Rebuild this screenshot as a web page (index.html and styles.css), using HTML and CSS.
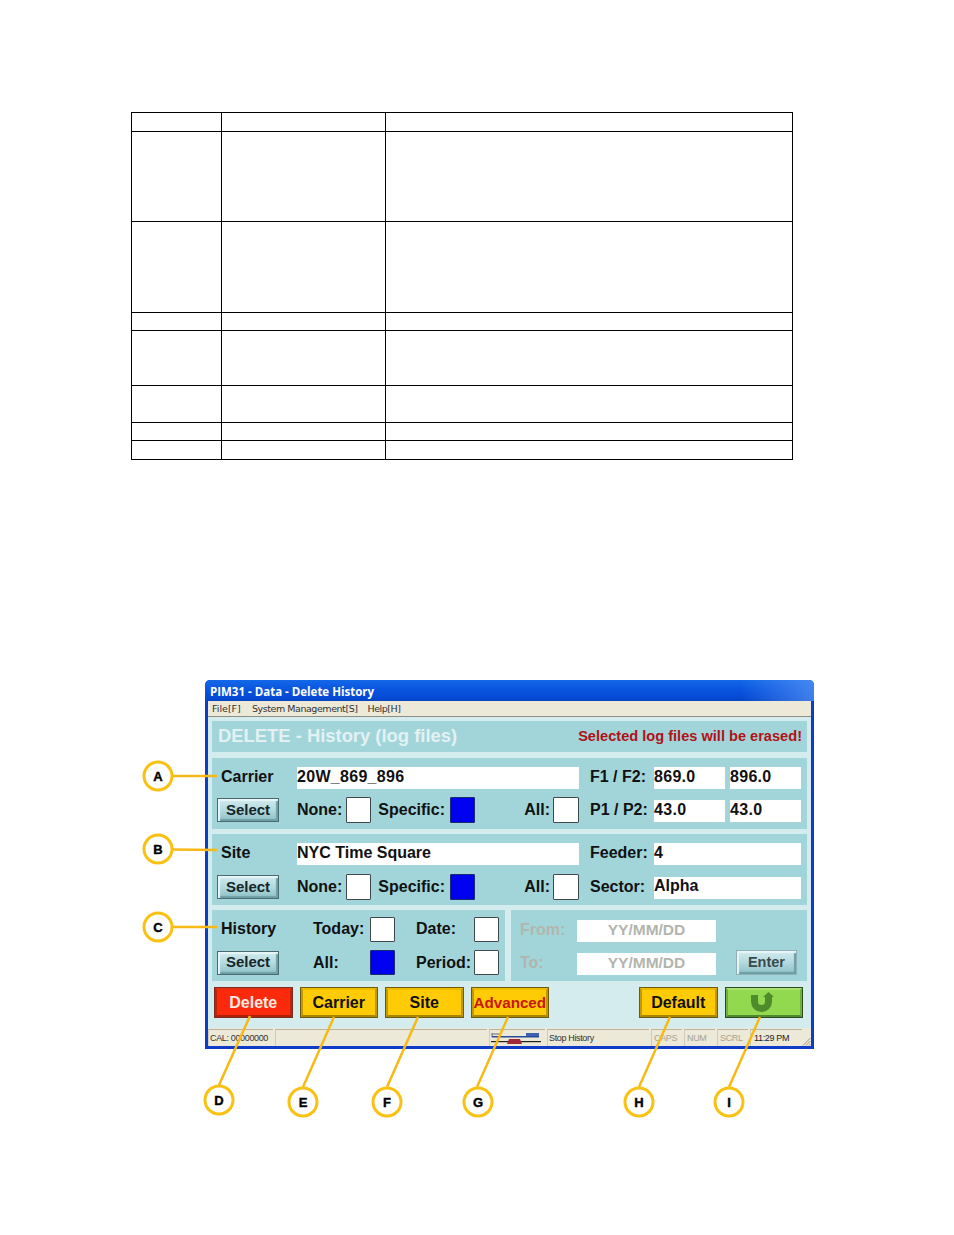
FILE: index.html
```html
<!DOCTYPE html>
<html lang="en">
<head>
<meta charset="utf-8">
<title>PIM31 - Data - Delete History</title>
<link rel="stylesheet" href="styles.css">
</head>
<body>
<main class="page">
  <table class="doc-table">
    <colgroup><col class="col-a"><col class="col-b"><col class="col-c"></colgroup>
    <tbody>
      <tr class="r19"><td></td><td></td><td></td></tr>
      <tr class="r90"><td></td><td></td><td></td></tr>
      <tr class="r91"><td></td><td></td><td></td></tr>
      <tr class="r18"><td></td><td></td><td></td></tr>
      <tr class="r55"><td></td><td></td><td></td></tr>
      <tr class="r37"><td></td><td></td><td></td></tr>
      <tr class="r18"><td></td><td></td><td></td></tr>
      <tr class="r19"><td></td><td></td><td></td></tr>
    </tbody>
  </table>

  <section class="figure">
    <div class="window">
      <div class="titlebar">PIM31 - Data - Delete History</div>
      <div class="menubar"><span class="menu-file">File[F]</span><span>System Management[S]</span><span>Help[H]</span></div>
      <div class="client">
        <div class="panel header">
          <h1>DELETE - History (log files)</h1>
          <p>Selected log files will be erased!</p>
        </div>

        <div class="panel form-grid">
          <span class="lbl name up">Carrier</span>
          <div class="field wide top num">20W_869_896</div>
          <span class="lbl side up">F1 / F2:</span>
          <div class="field top num cell-a">869.0</div>
          <div class="field top num cell-b">896.0</div>
          <button class="btn-select">Select</button>
          <span class="lbl">None:</span><span class="box"></span>
          <span class="lbl end spec">Specific:</span><span class="box on"></span>
          <span class="lbl end">All:</span><span class="box"></span>
          <span class="lbl side">P1 / P2:</span>
          <div class="field low num cell-a">43.0</div>
          <div class="field low num cell-b">43.0</div>
        </div>

        <div class="panel form-grid tight">
          <span class="lbl name up">Site</span>
          <div class="field wide top">NYC Time Square</div>
          <span class="lbl side up">Feeder:</span>
          <div class="field top span2">4</div>
          <button class="btn-select">Select</button>
          <span class="lbl">None:</span><span class="box"></span>
          <span class="lbl end spec">Specific:</span><span class="box on"></span>
          <span class="lbl end">All:</span><span class="box"></span>
          <span class="lbl side">Sector:</span>
          <div class="field low2 span2">Alpha</div>
        </div>

        <div class="history-row">
          <div class="panel history">
            <span class="lbl name up">History</span>
            <span class="lbl up">Today:</span><span class="box"></span>
            <span class="lbl up after-box">Date:</span><span class="box"></span>
            <button class="btn-select">Select</button>
            <span class="lbl">All:</span><span class="box on"></span>
            <span class="lbl after-box">Period:</span><span class="box"></span>
          </div>
          <div class="panel period">
            <span class="lbl muted up">From:</span>
            <div class="field dim">YY/MM/DD</div>
            <span class="lbl muted up">To:</span>
            <div class="field dim">YY/MM/DD</div>
            <button class="btn-select enter">Enter</button>
          </div>
        </div>

        <div class="actions">
          <button class="act red">Delete</button>
          <button class="act">Carrier</button>
          <button class="act">Site</button>
          <button class="act adv">Advanced</button>
          <button class="act push">Default</button>
          <button class="act green" aria-label="Back">
            <svg class="back-icon" width="24" height="21" viewBox="0 0 24 21"><path d="M3.500 3V9.500a7 7 0 0 0 14 0V4" fill="none" stroke="#4f8a2c" stroke-width="7"/><path d="M12 5 17.500 0 23 5z" fill="#4f8a2c"/></svg>
          </button>
        </div>
      </div>
      <div class="statusbar">
        <span class="cell c-cal">CAL: 00000000</span>
        <span class="cell c-fill"></span>
        <span class="cell c-icon">
          <svg width="50" height="15" viewBox="0 0 50 15"><path d="M1 2v4M1 3h9" stroke="#667" fill="none"/><rect x="1" y="5" width="47" height="1.500" fill="#2a4a9a"/><rect x="35" y="2" width="13" height="3" fill="#3a62b0"/><rect x="0" y="10" width="50" height="1.200" fill="#222"/><path d="M16 13l2-5h11l2 5z" fill="#a02a3a"/></svg>
        </span>
        <span class="cell c-msg">Stop History</span>
        <span class="cell c-key off">CAPS</span>
        <span class="cell c-key off">NUM</span>
        <span class="cell c-key off">SCRL</span>
        <span class="cell c-time">11:29 PM</span>
        <svg class="grip" width="9" height="9" viewBox="0 0 9 9"><path d="M8.500 1 1 8.500M8.500 4 4 8.500M8.500 7 7 8.500" stroke="#9a9684" fill="none"/></svg>
      </div>
    </div>

    <svg class="callouts" width="954" height="480" viewBox="0 0 954 480">
      <g class="lead">
        <path d="M172 96H217M172 169.500 217 170M172 247H217"/>
        <path d="M219 405 250 336M303 407 334 337M387 407 418 337M477 407 508 337M639 407 670 337M729 407 760 337"/>
      </g>
      <g class="ring">
        <circle cx="158" cy="96" r="14"/><circle cx="158" cy="169" r="14"/><circle cx="158" cy="247" r="14"/>
        <circle cx="219" cy="420" r="14"/><circle cx="303" cy="422" r="14"/><circle cx="387" cy="422" r="14"/>
        <circle cx="478" cy="422" r="14"/><circle cx="639" cy="422" r="14"/><circle cx="729" cy="422" r="14"/>
      </g>
      <g class="tag">
        <text x="158" y="101">A</text><text x="158" y="174">B</text><text x="158" y="252">C</text>
        <text x="219" y="425">D</text><text x="303" y="427">E</text><text x="387" y="427">F</text>
        <text x="478" y="427">G</text><text x="639" y="427">H</text><text x="729" y="427">I</text>
      </g>
    </svg>
  </section>
</main>
</body>
</html>
```
FILE: styles.css
```css
* { box-sizing: border-box; }
html, body { margin: 0; background: #fff; }
body { font-family: "Liberation Sans", Arial, sans-serif; color: #000; }
.page { width: 954px; height: 1235px; padding-top: 112px; overflow: hidden; }

.doc-table { margin-left: 131px; width: 661px; table-layout: fixed; border-collapse: collapse; }
.doc-table td { border: 1px solid #000; padding: 0; }
.col-a { width: 90px; } .col-b { width: 164px; } .col-c { width: 407px; }
.r18 { height: 18px; } .r19 { height: 19px; } .r37 { height: 37px; }
.r55 { height: 55px; } .r90 { height: 90px; } .r91 { height: 91px; }

.figure { position: relative; margin-top: 220px; height: 480px; }
.callouts { position: absolute; left: 0; top: 0; pointer-events: none; }
.lead path { fill: none; stroke: #f7b916; stroke-width: 2.500; }
.ring circle { fill: #fff; stroke: #f9c213; stroke-width: 3; }
.tag text { font: bold 13px "Liberation Sans", Arial, sans-serif; text-anchor: middle; fill: #000; stroke: #000; stroke-width: .4px; }

.window { margin-left: 205px; width: 609px; height: 369px; display: flex; flex-direction: column;
  background: #0f3bc8; border-radius: 5px 5px 0 0; padding: 0 3px 3px; overflow: hidden; }
.titlebar { margin: 0 -3px; padding: 4px 0 0 5px; height: 21px; color: #fff; font: bold 11.500px "Open Sans", sans-serif; white-space: nowrap;
  background: linear-gradient(90deg, rgba(0,0,0,0) 88%, rgba(90,150,245,.7) 100%), linear-gradient(180deg, #1368e8 0%, #0a55df 45%, #0448d2 90%, #0a46b8 100%); }
.menubar { height: 16px; flex: none; display: flex; gap: 10px; padding: 1px 0 0 4px; background: #ece9d8; border-bottom: 1px solid #8e8e84;
  font: 9.500px/14px "DejaVu Sans", sans-serif; letter-spacing: -.45px; color: #333; }
.menu-file { width: 30px; letter-spacing: 0; }
.client { flex: 1; background: #d5ecef; padding: 4px 4px 0; display: flex; flex-direction: column; gap: 5px; }

.panel { background: #a1d5da; }
.header { height: 31px; display: flex; justify-content: space-between; align-items: center; padding: 0 5px 0 6px; margin-bottom: 1px; }
.header h1 { margin: 0 0 2px; font-size: 18.400px; font-weight: bold; color: #e3f1f3; }
.header p { margin: 0 0 2px; font-size: 14.600px; font-weight: bold; color: #b01218; }

.lbl { font-size: 16px; font-weight: bold; color: #111; white-space: nowrap; align-self: center; }
.lbl.up { margin-bottom: 2px; }
.lbl.name { padding-left: 4px; }
.lbl.end { justify-self: end; padding-right: 3px; }
.lbl.end.spec { padding-right: 5px; }
.lbl.side { padding-left: 11px; }
.lbl.muted { color: #b3b5ad; }
.lbl.after-box { padding-left: 21px; }

.form-grid { height: 71px; padding: 7px 6px 6px 5px; display: grid; row-gap: 6px;
  grid-template-columns: 80px 49px 25px 79px 25px 78px 26px 75px 71px 76px; grid-template-rows: 26px 26px; }
.form-grid.tight { padding-bottom: 5px; row-gap: 7px; }

.field { background: #fff; height: 22px; align-self: center; font-size: 16px; font-weight: bold; line-height: 22px; color: #111; white-space: nowrap; }
.field.num { letter-spacing: .3px; }
.field.top { line-height: 20px; }
.field.low { margin-top: 2px; line-height: 20px; }
.field.low2 { margin-top: 2px; line-height: 18px; }
.field.wide { grid-column: 2 / span 6; }
.cell-a { width: 71px; }
.cell-b { width: 71px; margin-left: 5px; }
.field.span2 { grid-column: span 2; width: 147px; }
.field.dim { color: #b3b5ad; text-align: center; font-size: 15.500px; line-height: 20px; width: 139px; }

.box { background: #fff; border: 1px solid #404a4c; border-radius: 1px; width: 100%; height: 100%; display: block; }
.box.on { background: #0000f0; border-color: #1a2a6a; }

.btn-select { width: 62px; height: 24px; padding: 0 0 2px; align-self: center; font: bold 15px "Liberation Sans", Arial, sans-serif; color: #16262a;
  border: 1px solid #4a6a6f; box-shadow: inset 2px 2px 1px #e8f5f7, inset -2px -2px 1px #6f9fa6;
  background: linear-gradient(180deg, #d2ebee 0%, #b3dadf 50%, #8cc0c6 100%); }
.btn-select.enter { width: 61px; height: 25px; grid-column: 4; align-self: start; color: #3a4a4c; font-size: 14.500px; border-color: #8fb0b5; }

.history-row { display: flex; gap: 6px; height: 71px; }
.history { width: 293px; padding: 7px 6px 6px 5px; display: grid; row-gap: 8px;
  grid-template-columns: 96px 57px 25px 79px 25px; grid-template-rows: 25px 25px; }
.period { width: 296px; padding: 7px 10px 3px 9px; display: grid; row-gap: 5px;
  grid-template-columns: 57px 139px 20px 61px; grid-template-rows: 28px 28px; }
.period .lbl { grid-column: 1; }

.actions { display: flex; margin-top: 1px; padding-left: 2px; gap: 7px; height: 31px; flex: none; }
.act { width: 78.500px; height: 31px; padding: 0; font: bold 16px "Liberation Sans", Arial, sans-serif; color: #111;
  background: #ffcb05; border: 3px solid; border-color: #ecbc00 #c09a00 #a88600 #c09a00; outline: 1px solid #6f5a12; outline-offset: -1px; }
.act.red { background: #fb2a0c; color: #ffe9e0; border-color: #e83010 #c02408 #ae2006 #c02408; outline-color: #7c2a22; }
.act.adv { color: #c8160c; font-size: 15.200px; }
.act.push { margin-left: 83px; }
.act.green { background: #92d94f; border-color: #a9e26e #6fae3f #4f8a30 #6fae3f; outline-color: #2e4a22; display: flex; align-items: center; justify-content: center; }
.back-icon { margin-right: 2px; }

.statusbar { height: 18px; flex: none; background: #ece9d8; display: flex; gap: 2px; align-items: stretch; font: 9px/16px "Liberation Sans", Arial, sans-serif; letter-spacing: -.35px; color: #333; position: relative; }
.cell { border-top: 1px solid #b8b4a2; border-left: 1px solid #cfcbb8; padding-left: 1px; white-space: nowrap; margin-top: 1px; }
.c-cal { width: 65px; }
.c-fill { width: 212px; }
.c-icon { width: 56px; padding-top: 1px; }
.c-msg { width: 102px; }
.c-key { width: 31px; padding-left: 2px; }
.c-key.off { color: #a5a393; }
.c-time { width: 52px; color: #222; padding-left: 3px; }
.grip { position: absolute; right: 0; bottom: 0; }

button { cursor: default; }
```
